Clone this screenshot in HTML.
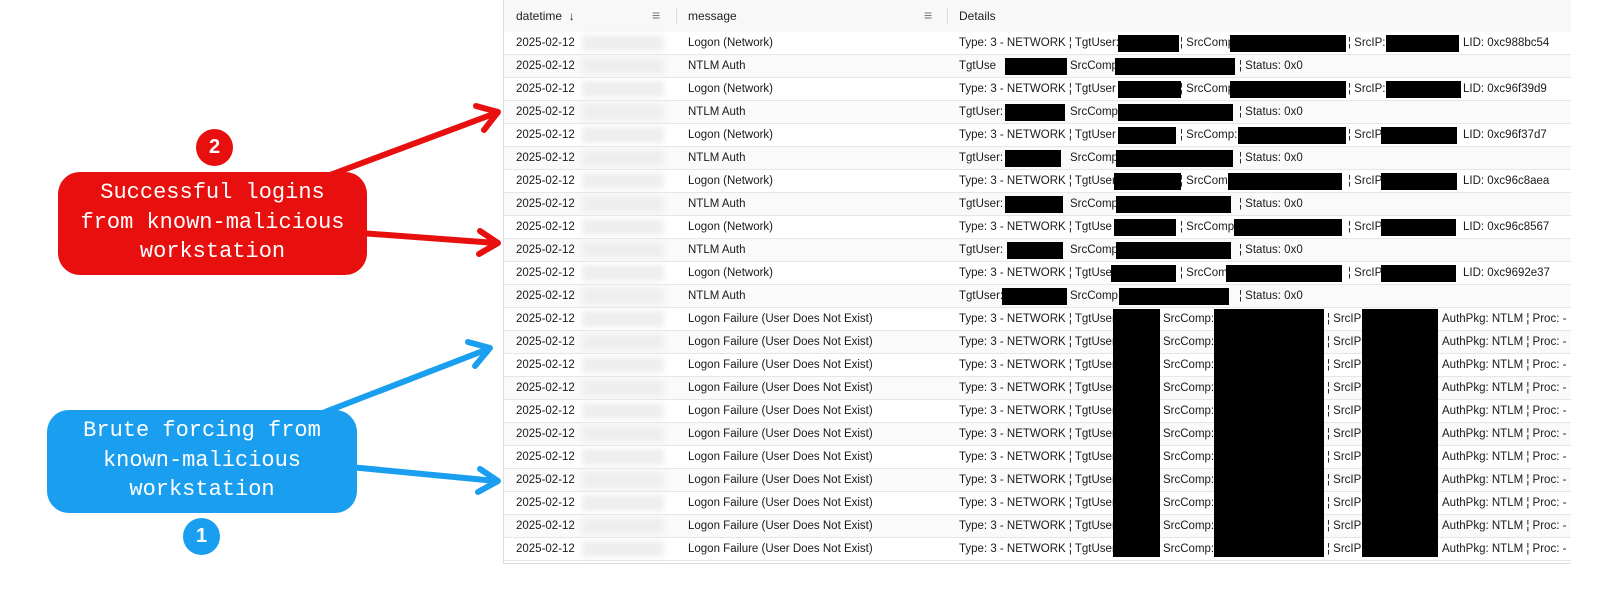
<!DOCTYPE html>
<html><head><meta charset="utf-8"><style>
body{margin:0;width:1600px;height:606px;background:#fff;position:relative;overflow:hidden;font-family:"Liberation Sans",Arial,sans-serif}
.tbl{position:absolute;left:503px;top:0;width:1067px;height:563px;border-left:1px solid #ddd;border-bottom:1px solid #ddd;overflow:hidden}
.hdr{position:absolute;left:0;top:0;width:100%;height:32px;background:#f8f8f8;border-bottom:1px solid #d8d8d8;font-size:12px;color:#222}
.hdr span{position:absolute;top:9px}
.row{position:absolute;left:0;width:100%;height:22px;border-bottom:1px solid #e6e6e6;font-size:11.5px;color:#1a1a1a}
.row span{position:absolute;top:5px;white-space:nowrap}
.blur{position:absolute;left:78px;top:3px;width:82px;height:16px;background:#eee;filter:blur(3px)}
.bx{position:absolute;background:#000}
.sep{position:absolute;top:8px;width:1px;height:16px;background:#ddd}
.note{position:absolute;color:#fff;font-family:"Liberation Mono",monospace;font-size:22px;text-align:center;line-height:29.5px;border-radius:22px;box-sizing:border-box;padding-top:6px}
.circ{position:absolute;width:37px;height:37px;border-radius:50%;color:#fff;font-size:20px;font-weight:bold;text-align:center;line-height:37px}
</style></head><body>
<div class="tbl">
<div class="hdr"><span style="left:12px">datetime &nbsp;↓</span><span style="left:148px;top:7px;color:#777;font-size:14px">≡</span><div class="sep" style="left:172px"></div><span style="left:184px">message</span><span style="left:420px;top:7px;color:#777;font-size:14px">≡</span><div class="sep" style="left:443px"></div><span style="left:455px">Details</span></div>
<div id="rows"></div>
</div>
<script>
var L=[
["Logon (Network)","Type: 3 - NETWORK ¦ TgtUser:","LID: 0xc988bc54",[[1117,1178],[1229,1345],[1385,1458]]],
["NTLM Auth","TgtUse","Status: 0x0",[[1004,1066],[1114,1234]]],
["Logon (Network)","Type: 3 - NETWORK ¦ TgtUser","LID: 0xc96f39d9",[[1117,1180],[1229,1345],[1385,1460]]],
["NTLM Auth","TgtUser:","Status: 0x0",[[1004,1064],[1117,1232]]],
["Logon (Network)","Type: 3 - NETWORK ¦ TgtUser","LID: 0xc96f37d7",[[1117,1175],[1237,1345],[1380,1456]]],
["NTLM Auth","TgtUser:","Status: 0x0",[[1004,1060],[1115,1232]]],
["Logon (Network)","Type: 3 - NETWORK ¦ TgtUser","LID: 0xc96c8aea",[[1113,1180],[1227,1341],[1380,1456]]],
["NTLM Auth","TgtUser:","Status: 0x0",[[1004,1062],[1115,1230]]],
["Logon (Network)","Type: 3 - NETWORK ¦ TgtUse","LID: 0xc96c8567",[[1113,1175],[1233,1341],[1380,1455]]],
["NTLM Auth","TgtUser:","Status: 0x0",[[1006,1062],[1115,1230]]],
["Logon (Network)","Type: 3 - NETWORK ¦ TgtUse","LID: 0xc9692e37",[[1110,1175],[1225,1341],[1380,1455]]],
["NTLM Auth","TgtUser:","Status: 0x0",[[1001,1066],[1118,1228]]]];
var h='';
for(var i=0;i<23;i++){
 var y=32+23*i, bg=i%2?'#fafafa':'#fff';
 h+='<div class="row" style="top:'+y+'px;background:'+bg+'"><span style="left:12px">2025-02-12</span><div class="blur"></div>';
 if(i<12){var r=L[i];
  h+='<span style="left:184px">'+r[0]+'</span>';
  var ln=r[0]=='NTLM Auth';
  h+='<span style="left:455px">'+r[1]+'</span>';
  h+='<span style="left:'+(ln?566:676)+'px">'+(ln?'SrcComp':'¦ SrcComp:')+'</span>';
  if(!ln) h+='<span style="left:844px">¦ SrcIP:</span>';
  h+='<span style="left:'+(ln?735:959)+'px">'+(ln?'¦ ':'')+r[2]+'</span>';
  r[3].forEach(function(b){h+='<div class="bx" style="left:'+(b[0]-503)+'px;top:3px;width:'+(b[1]-b[0])+'px;height:17px"></div>'});
 } else {
  h+='<span style="left:184px">Logon Failure (User Does Not Exist)</span><span style="left:455px">Type: 3 - NETWORK ¦ TgtUser</span><span style="left:659px">SrcComp:</span><span style="left:823px">¦ SrcIP:</span><span style="left:938px">AuthPkg: NTLM ¦ Proc: -</span>';
 }
 h+='</div>';
}
h+='<div class="bx" style="left:609px;top:309px;width:47px;height:248px"></div><div class="bx" style="left:710px;top:309px;width:110px;height:248px"></div><div class="bx" style="left:858px;top:309px;width:76px;height:248px"></div>';
document.getElementById('rows').innerHTML=h;
</script>
<svg style="position:absolute;left:0;top:0" width="1600" height="606">
<g stroke="#e8100f" stroke-width="6" fill="none" stroke-linecap="round" stroke-linejoin="round">
<line x1="330" y1="175" x2="496" y2="113"/><polyline points="476,106 498,112 484,130"/>
<line x1="360" y1="233" x2="496" y2="243"/><polyline points="480,231 498,243 479,254"/>
</g>
<g stroke="#1a9ff0" stroke-width="6" fill="none" stroke-linecap="round" stroke-linejoin="round">
<line x1="325" y1="412" x2="488" y2="349"/><polyline points="468,342 490,348 475,366"/>
<line x1="350" y1="467" x2="496" y2="481"/><polyline points="480,469 498,481 478,492"/>
</g></svg>
<div class="circ" style="left:196px;top:129px;background:#e8100f">2</div>
<div class="note" style="left:58px;top:172px;width:309px;height:103px;background:#e8100f">Successful logins<br>from known-malicious<br>workstation</div>
<div class="note" style="left:47px;top:410px;width:310px;height:103px;background:#1a9ff0">Brute forcing from<br>known-malicious<br>workstation</div>
<div class="circ" style="left:183px;top:518px;background:#1a9ff0">1</div>
</body></html>
